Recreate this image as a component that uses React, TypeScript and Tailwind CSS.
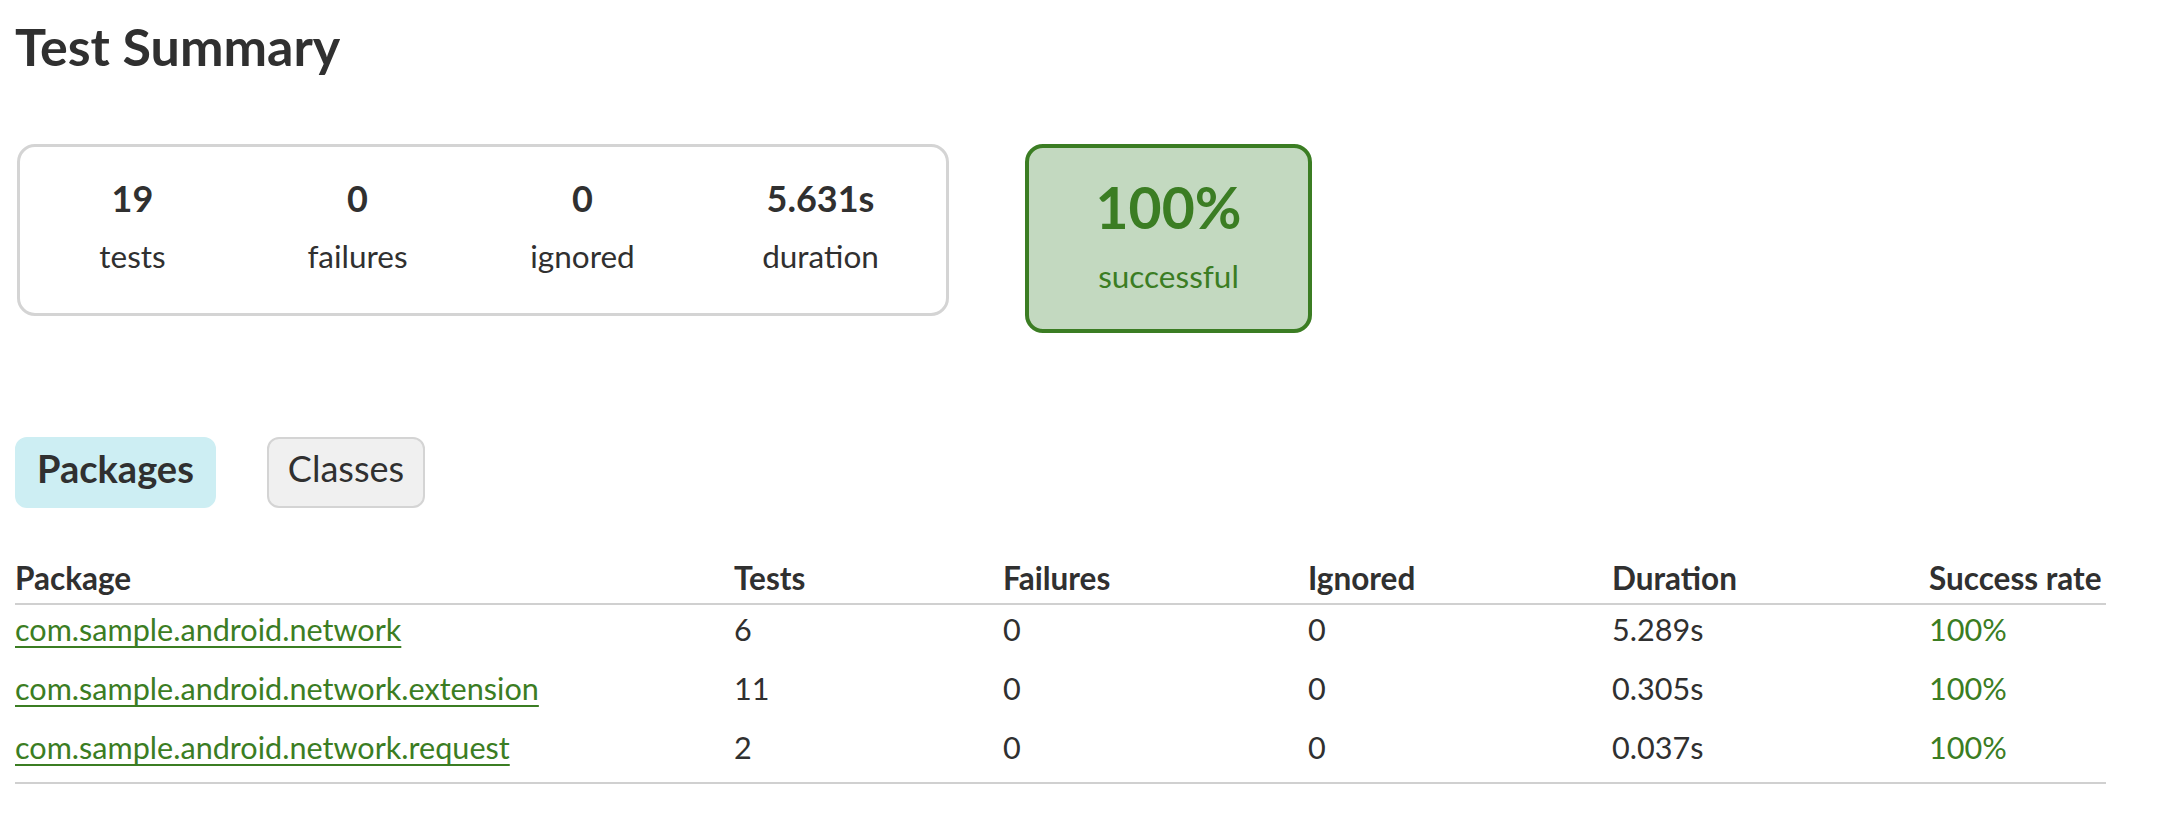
import React from "react";

const packages = [
  { name: "com.sample.android.network", tests: 6, failures: 0, ignored: 0, duration: "5.289s", rate: "100%" },
  { name: "com.sample.android.network.extension", tests: 11, failures: 0, ignored: 0, duration: "0.305s", rate: "100%" },
  { name: "com.sample.android.network.request", tests: 2, failures: 0, ignored: 0, duration: "0.037s", rate: "100%" },
];

const counters = [
  { value: "19", label: "tests", width: "w-[225px]" },
  { value: "0", label: "failures", width: "w-[225px]" },
  { value: "0", label: "ignored", width: "w-[225px]" },
  { value: "5.631s", label: "duration", width: "w-[251px]" },
];

const cols = "grid grid-cols-[719px_269px_305px_304px_317px_177px]";

export default function App() {
  return (
    <div className="min-h-screen bg-white px-[15px] pt-[20px] font-[Lato,sans-serif] text-[#303030]">
      <h1 className="text-[52px] leading-[52px] font-bold">Test Summary</h1>

      <div className="mt-[72px] flex items-start">
        <div className="ml-[2px] flex rounded-[18px] border-[3px] border-[#d4d4d4] pt-[29px] pb-[38px]">
          {counters.map((c) => (
            <div key={c.label} className={`${c.width} text-center`}>
              <p className="text-[36px] leading-[44px] font-bold">{c.value}</p>
              <p className="mt-[17px] text-[31.5px] leading-[38px]">{c.label}</p>
            </div>
          ))}
        </div>

        <div className="ml-[76px] w-[287px] rounded-[18px] border-4 border-[#3b7d23] bg-[#c3d9c0] pt-[27px] pb-[34px] text-center text-[#3b7d23]">
          <p className="text-[57px] leading-[64px] font-bold">100%</p>
          <p className="mt-[18px] text-[31.5px] leading-[38px]">successful</p>
        </div>
      </div>

      <div className="mt-[104px] flex gap-[51px] leading-[46px]">
        <div className="rounded-[12px] border-2 border-[#cdeef3] bg-[#cdeef3] px-[20px] pt-[6px] pb-[15px] text-[38px] font-bold">
          Packages
        </div>
        <div className="rounded-[12px] border-2 border-[#d4d4d4] bg-[#f0f0f0] px-[19px] pt-[6px] pb-[15px] text-[36px]">
          Classes
        </div>
      </div>

      <div className="mt-[51px] w-[2091px] border-b-2 border-[#d0d0d0] leading-[38px]">
        <div className={`${cols} border-b-2 border-[#d0d0d0] pb-[6px] text-[31.5px] font-bold`}>
          <div>Package</div>
          <div>Tests</div>
          <div>Failures</div>
          <div>Ignored</div>
          <div>Duration</div>
          <div>Success rate</div>
        </div>
        {packages.map((p) => (
          <div key={p.name} className={`${cols} h-[59px] pt-[6px] text-[30.6px]`}>
            <div>
              <a href="#" className="text-[#3b7d23] underline decoration-[2px] underline-offset-[5px]">
                {p.name}
              </a>
            </div>
            <div>{p.tests}</div>
            <div>{p.failures}</div>
            <div>{p.ignored}</div>
            <div>{p.duration}</div>
            <div className="text-[#3b7d23]">{p.rate}</div>
          </div>
        ))}
      </div>
    </div>
  );
}
